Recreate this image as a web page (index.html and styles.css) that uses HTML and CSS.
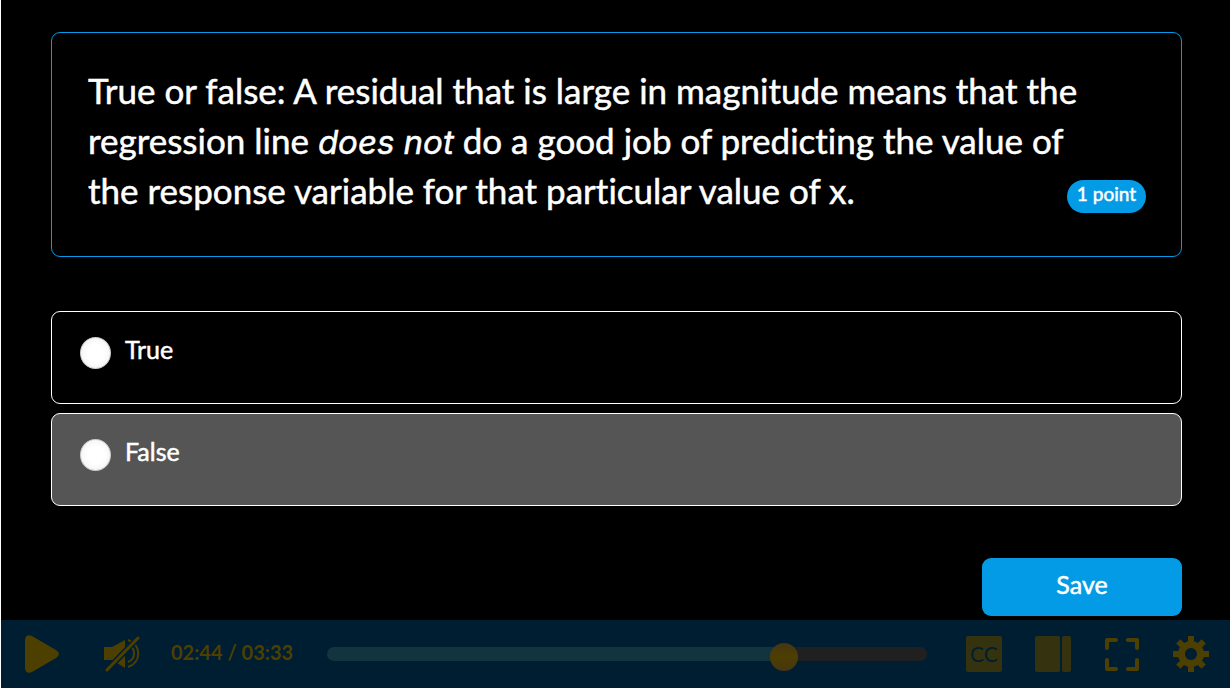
FILE: index.html
```html
<!DOCTYPE html>
<html lang="en">
<head>
<meta charset="utf-8">
<title>Video question</title>
<link rel="stylesheet" href="styles.css">
</head>
<body>
<main class="player">
  <form class="quiz">
    <section class="question">
      <p class="prompt" id="prompt">True or false: A residual that is large in magnitude means that the regression line <em>does not</em> do a good job of predicting the value of the response variable for that particular value of x.</p>
      <span class="points">1 point</span>
    </section>
    <div class="choices" role="radiogroup" aria-labelledby="prompt">
      <label class="choice"><input class="radio" type="radio" name="answer" value="true"><span>True</span></label>
      <label class="choice choice-hover"><input class="radio" type="radio" name="answer" value="false"><span>False</span></label>
    </div>
    <div class="actions"><button class="save" type="button">Save</button></div>
  </form>
  <div class="controls">
    <button class="control play" type="button" aria-label="Play">
      <svg width="36" height="40" viewBox="0 0 36 40"><path d="M1 6C1 2 4 0 8 2L32 16Q38 20 32 24L8 38C4 40 1 38 1 34Z"/></svg>
    </button>
    <button class="control mute" type="button" aria-label="Unmute">
      <svg width="38" height="36" viewBox="0 0 38 36">
        <path d="M1 11H9L22 4V32L9 24H1Z"/>
        <path class="line" d="M25 4A14 14 0 0 1 25 31M25 9A9 9 0 0 1 25 26"/>
        <path class="gap" d="M4 34L35 2"/>
        <path class="line slash" d="M4 34L35 2"/>
      </svg>
    </button>
    <span class="time">02:44 / 03:33</span>
    <input class="seek" type="range" min="0" max="213" value="165" aria-label="Seek">
    <div class="tools">
      <button class="control dim" type="button" aria-label="Captions"><span class="cc">CC</span></button>
      <button class="control dim" type="button" aria-label="Side panel">
        <svg width="36" height="36" viewBox="0 0 36 36"><rect width="25" height="36" rx="2"/><rect x="27" width="9" height="36" rx="2"/></svg>
      </button>
      <button class="control" type="button" aria-label="Full screen">
        <svg width="36" height="36" viewBox="0 0 36 36"><path class="frame" d="M3 12V4H12M24 4H33V12M33 24V33H24M12 33H3V24"/></svg>
      </button>
      <button class="control" type="button" aria-label="Settings">
        <svg width="36" height="36" viewBox="0 0 36 36">
          <circle cx="18" cy="18" r="13"/>
          <path d="M15 0H21V36H15Z"/><path d="M0 15H36V21H0Z"/>
          <path d="M15 0H21V36H15Z" transform="rotate(45 18 18)"/><path d="M15 0H21V36H15Z" transform="rotate(-45 18 18)"/>
          <circle class="hole" cx="18" cy="18" r="6"/>
        </svg>
      </button>
    </div>
  </div>
</main>
</body>
</html>
```
FILE: styles.css
```css
* { box-sizing: border-box; }
body { margin: 0; background: #000; color: #fff; font-family: Lato, "Open Sans", sans-serif; font-variant-ligatures: none; }
.player { min-height: 100vh; display: flex; flex-direction: column; justify-content: space-between; border-left: 1px solid #fff; }
.quiz { padding: 32px 48px 4px 50px; }
.question { position: relative; padding: 32px 70px 41px 36px; border: 1px solid #039be5; border-radius: 9px; }
.prompt { margin: 0; font-size: 35px; line-height: 50px; -webkit-text-stroke: 0.5px #fff; }
.prompt em { font-family: Inter, sans-serif; font-size: 33px; line-height: 1; }
.points { position: absolute; right: 35px; bottom: 43px; padding: 0 10px 5px; border-radius: 17px; background: #039be5; font-size: 19px; line-height: 28px; white-space: nowrap; -webkit-text-stroke: 0.5px #fff; }
.choices { display: grid; gap: 9px; margin-top: 54px; }
.choice { display: flex; align-items: flex-start; gap: 14px; padding: 20px 28px 34px; border: 1px solid #fff; border-radius: 9px; font-size: 25px; line-height: 35px; -webkit-text-stroke: 0.5px #fff; }
.choice-hover { background: #555; }
.radio { appearance: none; width: 31px; height: 32px; margin: 5px 0 0; border: 1px solid #ccc; border-radius: 50%; background: radial-gradient(circle, #fff 40%, #eee 100%); }
.actions { display: flex; justify-content: flex-end; margin-top: 52px; }
.save { width: 200px; height: 58px; padding: 0 0 6px; border: 0; border-radius: 9px; background: #039be5; color: #fff; font: 25px Lato, sans-serif; -webkit-text-stroke: 0.5px #fff; }
.controls { display: flex; align-items: center; min-height: 68px; padding: 0 21px 0 23px; background: #001e31; color: #4d3f00; }
.control { display: flex; flex: none; padding: 0; border: 0; background: none; color: #4d3f00; }
.control svg { display: block; fill: currentColor; }
.control .hole { fill: #001e31; }
.dim { color: #35330f; }
.mute { margin-left: 43px; }
.control .line { fill: none; stroke: currentColor; stroke-width: 2; }
.control .gap { fill: none; stroke: #001e31; stroke-width: 6; }
.control .slash { stroke-width: 3; stroke-linecap: round; }
.control .frame { fill: none; stroke: currentColor; stroke-width: 4; stroke-linecap: round; stroke-linejoin: round; }
.time { margin: 0 34px 4px 30px; font-size: 20px; font-weight: 700; white-space: nowrap; }
.seek { appearance: none; flex: 1; min-width: 0; height: 28px; margin: 0; background: none; }
.seek::-webkit-slider-runnable-track { height: 14px; border-radius: 7px; background: linear-gradient(90deg, #12343f 77%, #202020 77%); }
.seek::-webkit-slider-thumb { appearance: none; width: 28px; height: 28px; margin-top: -4px; border-radius: 50%; background: linear-gradient(#463514, #4d3f00, #463514); }
.tools { display: flex; gap: 33px; margin-left: 39px; }
.cc { width: 36px; height: 36px; border-radius: 2px; background: #35330f; color: #001e31; font: 21px/36px Lato, sans-serif; text-align: center; }
```
